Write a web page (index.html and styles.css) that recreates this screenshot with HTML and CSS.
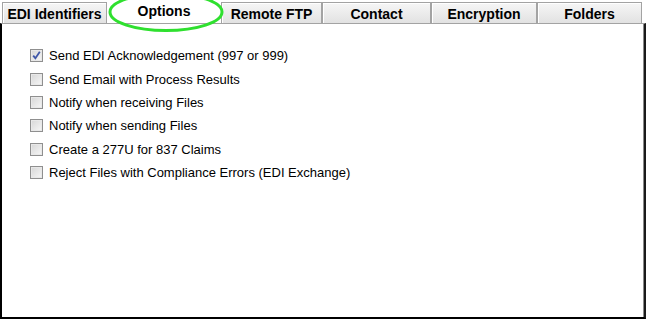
FILE: index.html
```html
<!DOCTYPE html>
<html lang="en">

<head>
    <meta charset="UTF-8">
    <meta name="viewport" content="width=device-width, initial-scale=1.0">
    <title>Trading Partner Options</title>
    <link rel="stylesheet" href="styles.css">
</head>

<body>
    <div class="window">
        <!-- tab strip -->
        <div class="tabs">
            <div class="tab tab-edi">EDI Identifiers</div>
            <div class="tab tab-options active">Options</div>
            <div class="tab tab-ftp">Remote FTP</div>
            <div class="tab tab-contact">Contact</div>
            <div class="tab tab-enc">Encryption</div>
            <div class="tab tab-folders">Folders</div>

            <!-- green highlight round the selected tab -->
            <svg class="highlight" width="130" height="44" viewBox="0 0 130 44">
                <ellipse cx="65" cy="18" rx="56" ry="18.5" fill="none" stroke="#2fe02f" stroke-width="3" />
            </svg>
        </div>

        <!-- options panel -->
        <div class="panel">
            <div class="option-list">
                <label class="option">
                    <span class="check checked">
                        <svg width="11" height="11" viewBox="0 0 11 11">
                            <path d="M2.2 5.6 L4.4 8.2 L8.8 1.8" fill="none" stroke="#3f57a8" stroke-width="1.8" />
                        </svg>
                    </span>
                    <span class="option-text">Send EDI Acknowledgement (997 or 999)</span>
                </label>
                <label class="option">
                    <span class="check"></span>
                    <span class="option-text">Send Email with Process Results</span>
                </label>
                <label class="option">
                    <span class="check"></span>
                    <span class="option-text">Notify when receiving Files</span>
                </label>
                <label class="option">
                    <span class="check"></span>
                    <span class="option-text">Notify when sending Files</span>
                </label>
                <label class="option">
                    <span class="check"></span>
                    <span class="option-text">Create a 277U for 837 Claims</span>
                </label>
                <label class="option">
                    <span class="check"></span>
                    <span class="option-text">Reject Files with Compliance Errors (EDI Exchange)</span>
                </label>
            </div>
        </div>
    </div>
</body>

</html>
```

FILE: styles.css
```css
body {
    margin: 0;
    padding: 0;
    background-color: #fff;
    font-family: "Liberation Sans", Arial, sans-serif;
    color: #000;
}

.window {
    width: 647px;
    height: 319px;
    display: flex;
    flex-direction: column;
}

/* タブ */
.tabs {
    position: relative;
    display: flex;
    height: 23px;
    padding-left: 2px;
    box-sizing: border-box;
    padding-top: 2px;
}

.tab {
    display: flex;
    justify-content: center;
    align-items: center;
    box-sizing: border-box;
    height: 21px;
    font-size: 14px;
    font-weight: bold;
    border: 1px solid #a3a3a3;
    border-bottom: none;
    box-shadow: inset 1px 1px 0 #fff;
    background: linear-gradient(#f6f6f6, #e2e2e2);
    padding-top: 2px;
}

.tab-edi {
    width: 105px;
}

.tab-options {
    width: 114px;
}

.tab-ftp {
    width: 101px;
}

.tab-contact {
    width: 109px;
}

.tab-enc {
    width: 106px;
}

.tab-folders {
    width: 105px;
}

.tab.active {
    background: #fff;
    border: none;
    box-shadow: none;
    height: 21px;
    padding-top: 0;
    align-items: flex-start;
    padding-top: 1px;
}

.highlight {
    position: absolute;
    left: 101px;
    top: -6px;
}

/* 本体 */
.panel {
    flex: 1;
    border-top: 1px solid #a3a3a3;
    border-left: 2px solid #000;
    border-bottom: 2px solid #000;
    border-right: 2px solid #1a1a1a;
    box-shadow: inset -1px 0 0 #8a8a8a;
    margin-right: 1px;
    background-color: #fff;
}

.option-list {
    display: flex;
    flex-direction: column;
    padding-top: 20px;
    padding-left: 28px;
}

.option {
    display: flex;
    align-items: center;
    height: 23.4px;
    font-size: 13px;
}

.check {
    display: flex;
    justify-content: center;
    align-items: center;
    width: 13px;
    height: 13px;
    box-sizing: border-box;
    border: 1px solid #8f8f8f;
    background: linear-gradient(135deg, #d6d6d6, #f7f7f7);
    box-shadow: inset 0 0 0 1px #e8e8e8;
}

.option-text {
    margin-left: 6px;
}
```
